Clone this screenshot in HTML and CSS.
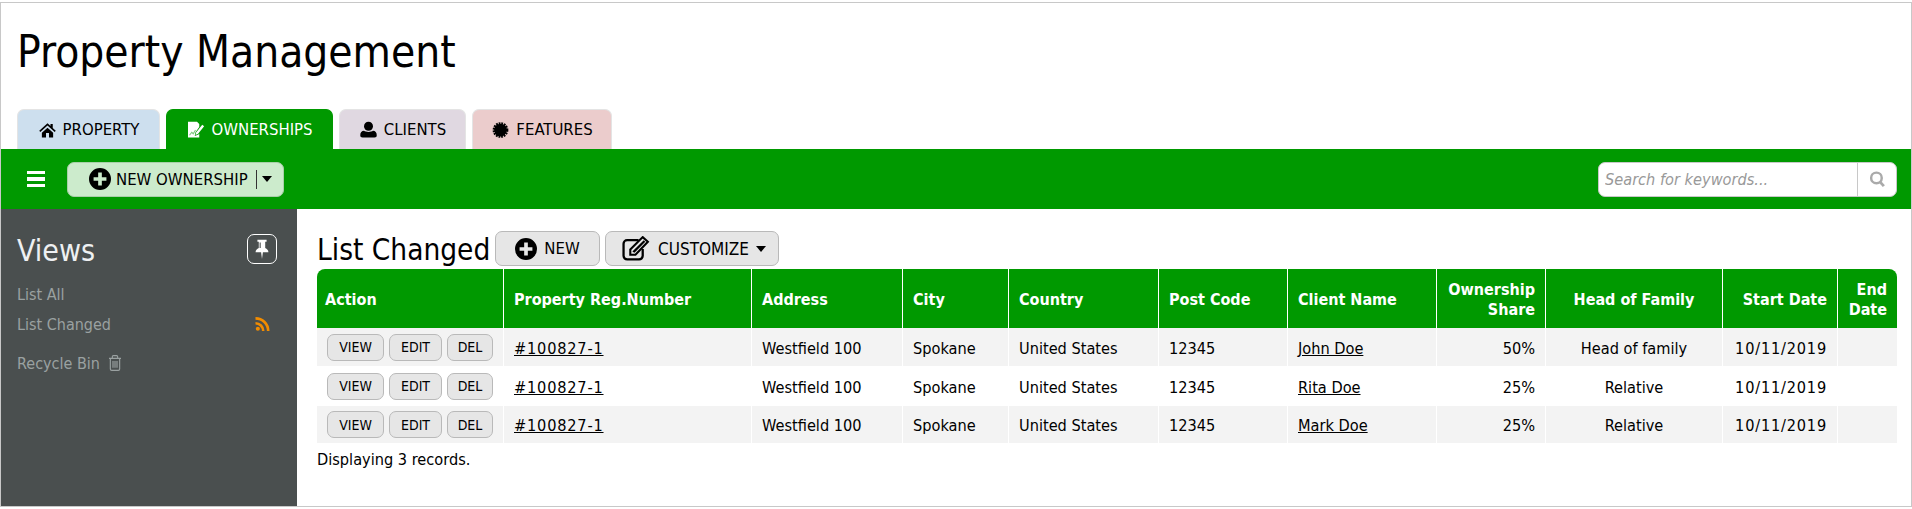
FILE: index.html
```html
<!DOCTYPE html>
<html lang="en">
<head>
<meta charset="utf-8">
<title>Property Management</title>
<link rel="stylesheet" href="styles.css">
</head>
<body>
<div class="page">
  <header class="masthead"><h1>Property Management</h1></header>
  <nav class="tabs">
    <a class="tab tab-property"><svg class="tab-icon" viewBox="0 0 24 24"><path d="M12 3 1 13l1.400 1.500L12 6l9.600 8.500L23 13l-4-3.600V4h-3v2.700zM4.500 15.500V22H10v-6h4v6h5.500v-6.500L12 9z"/></svg>PROPERTY</a>
    <a class="tab tab-ownerships"><svg class="tab-icon" viewBox="0 0 24 24"><path d="M2 1h12l3 3v4l-5 7-1 5 5-2 1-1v5H2z" fill="#fff"/><path d="M13 15 21 5l2.500 2-8 10-3.500 1.500z" fill="#fff"/><path d="M4 19l3-4 2 2 3-5" fill="none" stroke="#7fcc7f" stroke-width="1.500"/></svg>OWNERSHIPS</a>
    <a class="tab tab-clients"><svg class="tab-icon" viewBox="0 0 24 24"><circle cx="12" cy="7" r="6"/><path d="M6 13c2 2 10 2 12 0 3 0 5 2 5 6 0 2-1 3-3 3H4c-2 0-3-1-3-3 0-4 2-6 5-6z"/></svg>CLIENTS</a>
    <a class="tab tab-features"><svg class="tab-icon" viewBox="0 0 24 24"><circle cx="12" cy="12" r="8.500" stroke="#000" stroke-width="4" stroke-dasharray="2.200 1.136"/></svg>FEATURES</a>
  </nav>
  <div class="toolbar">
    <span class="burger"><i></i><i></i><i></i></span>
    <button class="btn btn-new-ownership"><svg class="plus" viewBox="0 0 24 24"><path fill-rule="evenodd" d="M12 0a12 12 0 1 0 0 24 12 12 0 0 0 0-24zM10 5h4v5h5v4h-5v5h-4v-5H5v-4h5z"/></svg><span>NEW OWNERSHIP</span><span class="split"></span><span class="caret"></span></button>
    <form class="search">
      <input class="search-input" type="text" placeholder="Search for keywords...">
      <span class="search-btn"><svg viewBox="0 0 24 24"><circle cx="10.500" cy="10.500" r="7.500" fill="none" stroke="#aaa" stroke-width="3.500"/><path d="M15.500 16 21 22" stroke="#aaa" stroke-width="4"/></svg></span>
    </form>
  </div>
  <div class="main">
    <aside class="sidebar">
      <div class="side-head">
        <h3>Views</h3>
        <span class="pin"><svg viewBox="0 0 24 24"><path d="M7 2h10v2h-1.500v7c2 1 3.500 2.500 3.500 4.500h-6L12 23l-1-7.500H5C5 13.500 6.500 12 8.500 11V4H7z" fill="#fff"/><path d="M10 5v6" stroke="#4a4f4f" stroke-width="1.200"/></svg></span>
      </div>
      <ul class="side-list">
        <li>List All</li>
        <li class="with-rss">List Changed<svg class="rss" viewBox="0 0 24 24"><circle cx="4" cy="20" r="3.500"/><path d="M0 8.500v4.500a11 11 0 0 1 11 11h4.500A15.500 15.500 0 0 0 0 8.500z"/><path d="M0 0v4.500A19.500 19.500 0 0 1 19.500 24H24A24 24 0 0 0 0 0z"/></svg></li>
        <li class="recycle">Recycle Bin<svg class="trash" viewBox="0 0 20 24"><path d="M1 5h18M6 5V2.500c0-1 .5-1.500 1.500-1.500h5c1 0 1.500.5 1.500 1.500V5M3 5v16c0 1.200.8 2 2 2h10c1.200 0 2-.8 2-2V5M7 9v10M10 9v10M13 9v10" fill="none" stroke="#9aa1a1" stroke-width="1.700"/></svg></li>
      </ul>
    </aside>
    <section class="content">
      <div class="title-row">
        <h2>List Changed</h2>
        <button class="btn btn-grey btn-new"><svg class="plus" viewBox="0 0 24 24"><path fill-rule="evenodd" d="M12 0a12 12 0 1 0 0 24 12 12 0 0 0 0-24zM10 5h4v5h5v4h-5v5h-4v-5H5v-4h5z"/></svg><span>NEW</span></button>
        <button class="btn btn-grey btn-customize"><svg class="edit" viewBox="0 0 28 24"><path d="M20 12.500V19c0 2-1.500 3.500-3.500 3.500H5C3 22.500 1.500 21 1.500 19V7.500C1.500 5.500 3 4 5 4h11" fill="none" stroke="#000" stroke-width="2.200"/><path d="M8 13 20 1l5 4.500L13 18H8z" fill="none" stroke="#000" stroke-width="2"/><path d="M10 15 21 4l1.500 1.500L12 16z"/></svg><span>CUSTOMIZE</span><span class="caret"></span></button>
      </div>
      <table class="grid">
        <colgroup>
          <col class="c1"><col class="c2"><col class="c3"><col class="c4"><col class="c5"><col class="c6"><col class="c7"><col class="c8"><col class="c9"><col class="c10"><col class="c11">
        </colgroup>
        <thead>
          <tr>
            <th class="th-action">Action</th><th>Property Reg.Number</th><th>Address</th><th>City</th><th>Country</th><th>Post Code</th><th>Client Name</th><th class="r">Ownership<br>Share</th><th class="m">Head of Family</th><th class="r">Start Date</th><th class="r">End<br>Date</th>
          </tr>
        </thead>
        <tbody>
          <tr>
            <td class="actions"><button class="mini">VIEW</button><button class="mini">EDIT</button><button class="mini">DEL</button></td>
            <td><a class="num">#100827-1</a></td><td>Westfield 100</td><td>Spokane</td><td>United States</td><td>12345</td><td><a>John Doe</a></td><td class="r">50%</td><td class="m">Head of family</td><td class="r num">10/11/2019</td><td></td>
          </tr>
          <tr>
            <td class="actions"><button class="mini">VIEW</button><button class="mini">EDIT</button><button class="mini">DEL</button></td>
            <td><a class="num">#100827-1</a></td><td>Westfield 100</td><td>Spokane</td><td>United States</td><td>12345</td><td><a>Rita Doe</a></td><td class="r">25%</td><td class="m">Relative</td><td class="r num">10/11/2019</td><td></td>
          </tr>
          <tr>
            <td class="actions"><button class="mini">VIEW</button><button class="mini">EDIT</button><button class="mini">DEL</button></td>
            <td><a class="num">#100827-1</a></td><td>Westfield 100</td><td>Spokane</td><td>United States</td><td>12345</td><td><a>Mark Doe</a></td><td class="r">25%</td><td class="m">Relative</td><td class="r num">10/11/2019</td><td></td>
          </tr>
        </tbody>
      </table>
      <p class="count">Displaying 3 records.</p>
    </section>
  </div>
</div>
</body>
</html>
```

FILE: styles.css
```css
* { box-sizing: border-box; }
html, body { margin: 0; padding: 0; height: 100%; overflow: hidden; background: #fff; }
body {
  padding-top: 2px;
  font-family: "DejaVu Sans Condensed", "DejaVu Sans", sans-serif;
  font-stretch: condensed;
  font-size: 16.200px;
  color: #000;
}
.page {
  height: 505px;
  border: 1px solid #c8c8c8;
  display: flex;
  flex-direction: column;
}
.masthead { height: 106px; padding: 21px 0 0 16px; }
h1 { margin: 0; font-size: 43.800px; font-weight: 400; line-height: 56px; }
.tabs { display: flex; gap: 6px; padding-left: 16px; height: 40px; align-items: stretch; }
.tab {
  display: flex;
  align-items: center;
  justify-content: center;
  gap: 6px;
  height: 40px;
  border: 1px solid #e4e4e4;
  border-bottom: 0;
  border-radius: 7px 7px 0 0;
  font-size: 16.600px;
}
.tab-icon { width: 19px; height: 18px; flex: none; }
.tab-property { width: 143px; background: #cddfee; }
.tab-ownerships { width: 167px; background: #009900; border-color: #009900; color: #fff; }
.tab-clients { width: 127px; background: #e0d8e1; }
.tab-features { width: 140px; background: #ebcccc; }
.toolbar {
  flex: none;
  height: 60px;
  background: #009900;
  display: flex;
  align-items: center;
  padding: 0 14px 0 26px;
}
.burger { display: flex; flex-direction: column; gap: 3px; width: 18px; margin-right: 22px; }
.burger i { display: block; height: 3.500px; background: #fff; }
.btn {
  display: flex;
  align-items: center;
  height: 35px;
  padding: 0;
  border: 1px solid #b9b9b9;
  border-radius: 7px;
  font: inherit;
  font-stretch: condensed;
  font-size: 16.600px;
  color: #000;
  justify-content: center;
}
.btn-new-ownership { width: 217px; background: #ccebcc; border-color: #a9cfa9; gap: 5px; justify-content: flex-start; padding-left: 21px; }
.btn-new-ownership .split { margin-left: 3px; margin-right: 0; }
.plus { width: 22px; height: 22px; flex: none; }
.split { width: 1px; height: 19px; background: #333; }
.caret {
  width: 0; height: 0;
  border-left: 5.500px solid transparent;
  border-right: 5.500px solid transparent;
  border-top: 6px solid #000;
}
.search { margin-left: auto; display: flex; width: 299px; height: 35px; background: #fff; border: 1px solid #c8c8c8; border-radius: 7px; overflow: hidden; }
.search-input {
  flex: 1;
  min-width: 0;
  border: 0;
  outline: 0;
  padding: 0 6px;
  font: italic 16.200px "DejaVu Sans Condensed", "DejaVu Sans", sans-serif;
  font-stretch: condensed;
  background: transparent;
}
.search-input::placeholder { color: #999; opacity: 1; }
.search-btn { width: 39px; border-left: 1px solid #c8c8c8; display: flex; align-items: center; justify-content: center; }
.search-btn svg { width: 17px; height: 18px; }
.main { flex: 1; display: flex; min-height: 0; }
.sidebar { width: 296px; flex: none; background: #4a4f4f; color: #9aa1a1; padding: 25px 20px 0 16px; }
.side-head { display: flex; justify-content: space-between; align-items: center; height: 30px; }
h3 { margin: 0; color: #eef0f2; font-size: 30px; font-weight: 400; height: 30px; line-height: 34px; }
.pin { width: 30px; height: 30px; border: 1px solid #fff; border-radius: 7px; display: flex; align-items: center; justify-content: center; }
.pin svg { width: 22px; height: 24px; }
.side-list { list-style: none; margin: 15px 0 0; padding: 0; }
.side-list li { display: flex; align-items: center; height: 30px; font-size: 16px; }
.side-list .recycle { margin-top: 9px; }
.with-rss { justify-content: space-between; padding-right: 7px; }
.rss { width: 15px; height: 14px; fill: #f28c00; }
.trash { width: 14px; height: 16px; margin-left: 8px; }
.content { flex: 1; min-width: 0; padding: 22px 14px 0 20px; }
.title-row { display: flex; align-items: center; gap: 5px; margin-bottom: 3px; }
h2 { margin: 0 2px 0 0; width: 171px; height: 35px; font-size: 29.500px; font-weight: 400; line-height: 39px; white-space: nowrap; }
.btn-grey { background: #e6e6e6; }
.btn-new { width: 105px; gap: 7px; }
.btn-customize { width: 174px; gap: 7px; padding-left: 4px; font-size: 17px; }
.edit { width: 29px; height: 25px; flex: none; }
.grid { width: 1580px; table-layout: fixed; border-collapse: separate; border-spacing: 0; }
.c1 { width: 187px; } .c2 { width: 248px; } .c3 { width: 151px; } .c4 { width: 106px; }
.c5 { width: 150px; } .c6 { width: 129px; } .c7 { width: 149px; } .c8 { width: 109px; }
.c9 { width: 177px; } .c10 { width: 115px; } .c11 { width: 59px; }
th {
  height: 59px;
  background: #009900;
  color: #fff;
  font-weight: 700;
  font-size: 16px;
  line-height: 20px;
  text-align: left;
  padding: 2px 10px 0 10px;
  border-right: 1px solid #fff;
}
th:first-child { border-top-left-radius: 8px; padding-left: 8px; }
th:last-child { border-top-right-radius: 8px; border-right: 0; }
td { padding: 2px 10px 0; border-right: 1px solid #fff; white-space: nowrap; }
td:last-child { border-right: 0; }
tbody tr:nth-child(1) td { height: 38px; background: #f3f3f3; }
tbody tr:nth-child(2) td { height: 40px; background: #fff; }
tbody tr:nth-child(3) td { height: 37px; background: #f3f3f3; }
.r { text-align: right; }
.m { text-align: center; }
td a { color: #000; text-decoration: underline; }
.num { letter-spacing: .8px; }
td.actions { padding: 0 0 0 10px; font-size: 0; }
.mini {
  height: 27px;
  margin-right: 5px;
  padding: 0;
  background: #e6e6e6;
  border: 1px solid #b9b9b9;
  border-radius: 7px;
  font: 14px "DejaVu Sans Condensed", "DejaVu Sans", sans-serif;
  font-stretch: condensed;
  color: #000;
  vertical-align: middle;
}
.mini:nth-child(1) { width: 57px; }
.mini:nth-child(2) { width: 53px; }
.mini:nth-child(3) { width: 46px; }
.count { margin: 7px 0 0; line-height: 20px; }
```
